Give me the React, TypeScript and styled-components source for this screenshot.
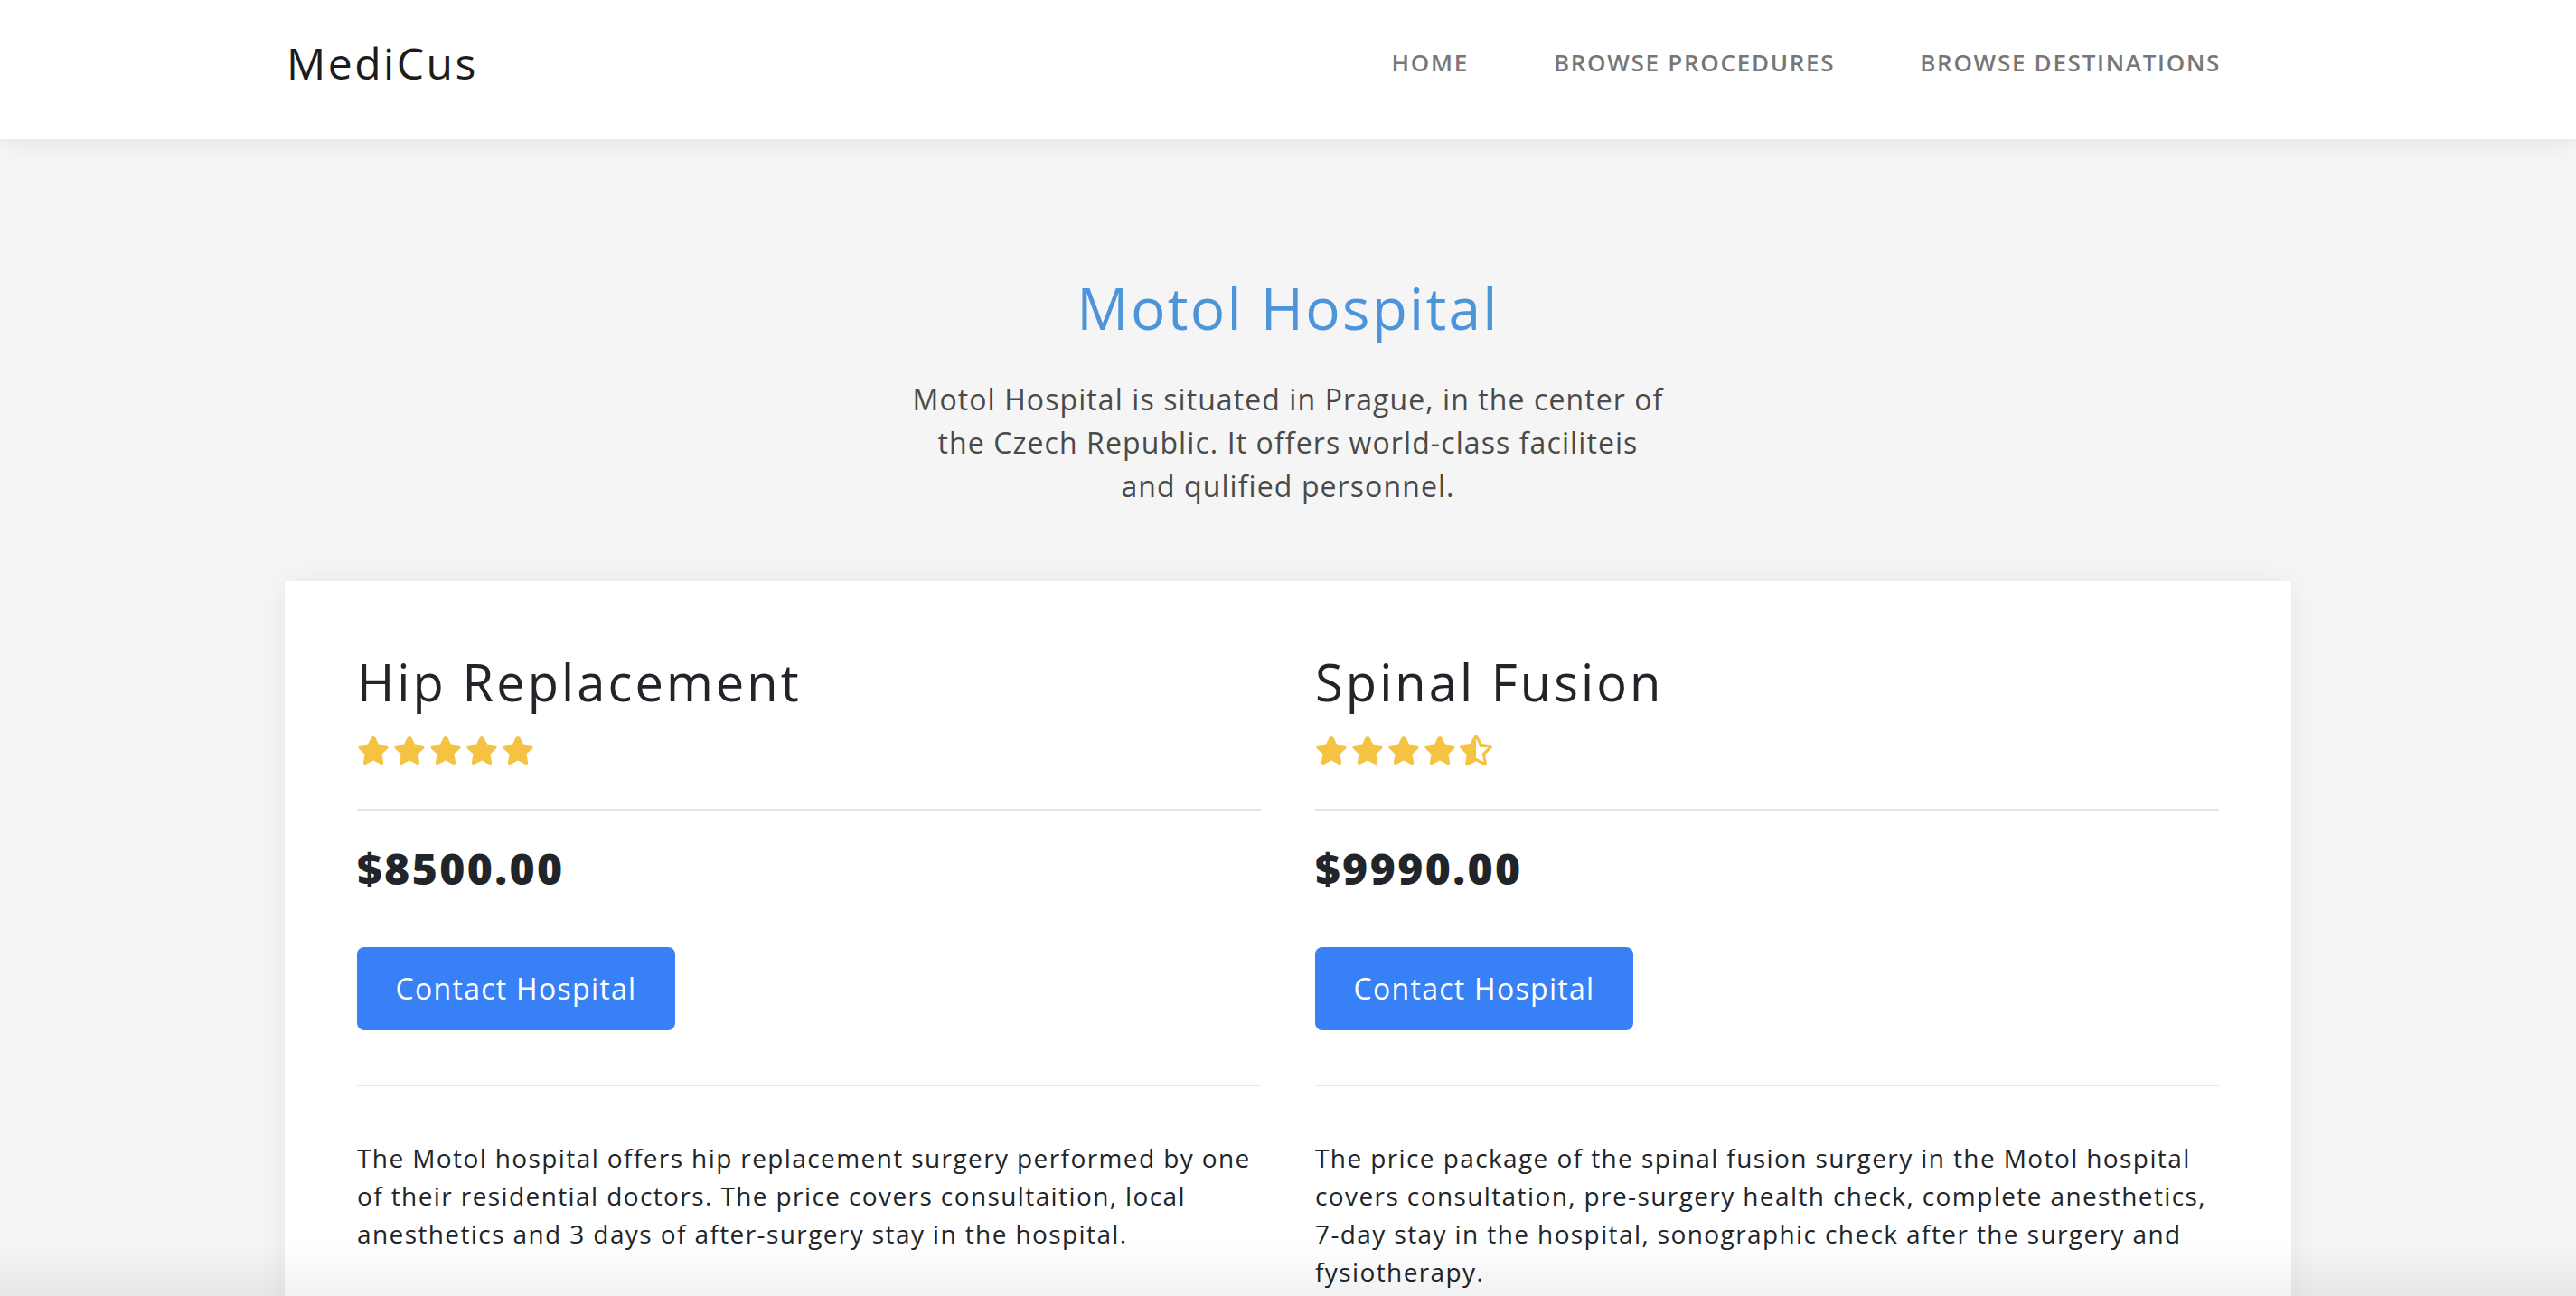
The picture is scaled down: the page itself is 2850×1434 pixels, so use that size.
import React from 'react';
import styled, { createGlobalStyle } from 'styled-components';
import { FaStar, FaStarHalfAlt } from 'react-icons/fa';

const GlobalStyle = createGlobalStyle`
  body {
    margin: 0;
    background: #f5f5f5;
    font-family: 'Open Sans', 'Liberation Sans', sans-serif;
    color: #212529;
  }
`;

const Header = styled.header`
  background: #fff;
  height: 154px;
  box-shadow: 0 4px 24px rgba(0, 0, 0, 0.07);
  position: relative;
  z-index: 2;
`;

const Container = styled.div`
  width: 2220px;
  margin: 0 auto;
`;

const NavBar = styled(Container)`
  height: 100%;
  box-sizing: border-box;
  padding-bottom: 16px;
  display: flex;
  align-items: center;
  justify-content: space-between;
`;

const Logo = styled.div`
  font-size: 48px;
  color: #1c1c1c;
  letter-spacing: 0.053em;
  margin-left: 2px;
`;

const Nav = styled.nav`
  display: flex;
  gap: 94px;
  padding-right: 78px;
`;

const NavLink = styled.a`
  font-size: 26px;
  font-weight: 600;
  color: #777;
  text-transform: uppercase;
  text-decoration: none;
  letter-spacing: 0.066em;
`;

const Hero = styled.section`
  padding-top: 149px;
  text-align: center;
`;

const Title = styled.h1`
  margin: 0;
  font-size: 64px;
  font-weight: 400;
  line-height: 1.2;
  color: #4d94db;
  letter-spacing: 0.035em;
`;

const Intro = styled.p`
  margin: 38px auto 0;
  font-size: 32px;
  line-height: 48px;
  color: #4a4a4a;
  letter-spacing: 0.034em;
`;

const Card = styled(Container)`
  margin-top: 81px;
  background: #fff;
  box-shadow: 0 0 30px rgba(0, 0, 0, 0.06);
  padding: 78px 80px 80px;
  box-sizing: border-box;
  display: grid;
  grid-template-columns: 1fr 1fr;
  column-gap: 60px;
`;

const Procedure = styled.div`
  display: flex;
  flex-direction: column;
`;

const ProcName = styled.h3`
  margin: 0;
  font-size: 56px;
  font-weight: 400;
  line-height: 1.2;
  letter-spacing: 0.055em;
`;

const Stars = styled.div`
  display: flex;
  gap: 4px;
  margin-top: 25px;
  color: #f5c242;
  height: 34px;
  align-items: center;
`;

const Divider = styled.hr<{ $gap: number }>`
  border: 0;
  border-top: 2px solid #e6e6e6;
  margin: ${({ $gap }) => $gap}px 0 0;
  width: 100%;
`;

const Price = styled.div`
  margin-top: 35px;
  font-size: 48px;
  font-weight: 800;
  line-height: 1.2;
  letter-spacing: 0.05em;
`;

const Button = styled.button`
  margin-top: 58px;
  align-self: flex-start;
  width: 352px;
  height: 92px;
  border: 0;
  border-radius: 8px;
  background: #3880f5;
  color: #fff;
  font-family: inherit;
  font-size: 32px;
  letter-spacing: 0.04em;
  cursor: pointer;
`;

const Description = styled.p`
  margin: 58px 0 0;
  font-size: 28px;
  line-height: 42px;
  letter-spacing: 0.05em;
  white-space: nowrap;
`;

const BottomFade = styled.div`
  position: fixed;
  left: 0;
  right: 0;
  bottom: 0;
  height: 60px;
  background: linear-gradient(to bottom, rgba(0, 0, 0, 0), rgba(0, 0, 0, 0.055));
  pointer-events: none;
`;

type ProcedureData = {
  name: string;
  rating: number;
  price: string;
  text: string[];
};

const procedures: ProcedureData[] = [
  {
    name: 'Hip Replacement',
    rating: 5,
    price: '$8500.00',
    text: [
      'The Motol hospital offers hip replacement surgery performed by one',
      'of their residential doctors. The price covers consultaition, local',
      'anesthetics and 3 days of after-surgery stay in the hospital.',
    ],
  },
  {
    name: 'Spinal Fusion',
    rating: 4.5,
    price: '$9990.00',
    text: [
      'The price package of the spinal fusion surgery in the Motol hospital',
      'covers consultation, pre-surgery health check, complete anesthetics,',
      '7-day stay in the hospital, sonographic check after the surgery and',
      'fysiotherapy.',
    ],
  },
];

const Lines: React.FC<{ lines: string[] }> = ({ lines }) => (
  <>
    {lines.map((l, i) => (
      <React.Fragment key={i}>
        {l}
        {i < lines.length - 1 && <br />}
      </React.Fragment>
    ))}
  </>
);

const Rating: React.FC<{ value: number }> = ({ value }) => (
  <Stars>
    {[0, 1, 2, 3, 4].map((i) =>
      value >= i + 1 ? (
        <FaStar key={i} size={36} />
      ) : (
        <FaStarHalfAlt key={i} size={36} />
      )
    )}
  </Stars>
);

export default function App() {
  return (
    <>
      <GlobalStyle />
      <Header>
        <NavBar>
          <Logo>MediCus</Logo>
          <Nav>
            <NavLink href="#">Home</NavLink>
            <NavLink href="#">Browse Procedures</NavLink>
            <NavLink href="#">Browse Destinations</NavLink>
          </Nav>
        </NavBar>
      </Header>
      <Hero>
        <Title>Motol Hospital</Title>
        <Intro>
          <Lines
            lines={[
              'Motol Hospital is situated in Prague, in the center of',
              'the Czech Republic. It offers world-class faciliteis',
              'and qulified personnel.',
            ]}
          />
        </Intro>
      </Hero>
      <Card>
        {procedures.map((p) => (
          <Procedure key={p.name}>
            <ProcName>{p.name}</ProcName>
            <Rating value={p.rating} />
            <Divider $gap={48} />
            <Price>{p.price}</Price>
            <Button>Contact Hospital</Button>
            <Divider $gap={60} />
            <Description>
              <Lines lines={p.text} />
            </Description>
          </Procedure>
        ))}
      </Card>
      <BottomFade />
    </>
  );
}
